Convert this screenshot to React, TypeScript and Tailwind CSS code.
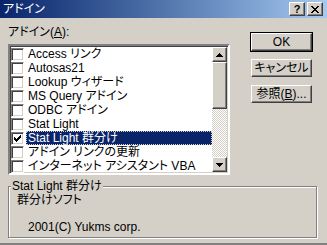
import React from 'react';

const items = [
  { label: 'Access リンク', checked: false },
  { label: 'Autosas21', checked: false },
  { label: 'Lookup ウィザード', checked: false },
  { label: 'MS Query アドイン', checked: false },
  { label: 'ODBC アドイン', checked: false },
  { label: 'Stat Light', checked: false },
  { label: 'Stat Light 群分け', checked: true, selected: true },
  { label: 'アドイン リンクの更新', checked: false },
  { label: 'インターネット アシスタント VBA', checked: false },
];

const raised =
  'border border-t-white border-l-white border-b-[#404040] border-r-[#404040] shadow-[inset_-1px_-1px_0_#808080]';

const CheckBox: React.FC<{ checked: boolean }> = ({ checked }) => (
  <div className="w-[13px] h-[13px] bg-white border border-t-[#808080] border-l-[#808080] border-b-white border-r-white shadow-[inset_1px_1px_0_#404040,inset_-1px_-1px_0_#d4d0c8] flex items-center justify-center">
    {checked && (
      <svg width="7" height="7" viewBox="0 0 7 7" shapeRendering="crispEdges">
        <path d="M0 2h1v3h-1zM1 3h1v3h-1zM2 4h1v3h-1zM3 3h1v3h-1zM4 2h1v3h-1zM5 1h1v3h-1zM6 0h1v3h-1z" fill="#000" />
      </svg>
    )}
  </div>
);

const Arrow: React.FC<{ down?: boolean }> = ({ down }) => (
  <div className={`w-full h-[15px] bg-[#d4d0c8] flex items-center justify-center ${raised}`}>
    <svg width="7" height="4" viewBox="0 0 7 4" shapeRendering="crispEdges">
      {down ? (
        <path d="M0 0h7v1h-7zM1 1h5v1h-5zM2 2h3v1h-3zM3 3h1v1h-1z" fill="#000" />
      ) : (
        <path d="M3 0h1v1h-1zM2 1h3v1h-3zM1 2h5v1h-5zM0 3h7v1h-7z" fill="#000" />
      )}
    </svg>
  </div>
);

const Button: React.FC<{ children: React.ReactNode; primary?: boolean }> = ({ children, primary }) => (
  <div className={primary ? 'border border-black' : 'border border-transparent'}>
    <div className={`h-[18px] w-[61px] bg-[#d4d0c8] flex items-center justify-center leading-[14px] ${raised}`}>
      {children}
    </div>
  </div>
);

export default function App() {
  return (
    <div className="w-[327px] h-[245px] bg-[#d4d0c8] flex flex-col overflow-hidden text-[12px] text-black font-['Liberation_Sans','Noto_Sans_CJK_JP',sans-serif] [font-feature-settings:'palt'] border-b-2 border-b-[#808080]">
      {/* title bar */}
      <div className="h-[18px] shrink-0 bg-gradient-to-r from-[#0a246a] to-[#a6caf0] flex items-center justify-between pl-[3px] pr-[4px]">
        <span className="text-white leading-[14px]">アドイン</span>
        <div className="flex gap-[2px]">
          <div className={`w-[16px] h-[14px] bg-[#d4d0c8] flex items-center justify-center font-bold text-[11px] leading-none ${raised}`}>?</div>
          <div className={`w-[16px] h-[14px] bg-[#d4d0c8] flex items-center justify-center ${raised}`}>
            <svg width="8" height="7" viewBox="0 0 8 7" shapeRendering="crispEdges">
              <path d="M0 0h2v1h-2zM6 0h2v1h-2zM1 1h2v1h-2zM5 1h2v1h-2zM2 2h4v1h-4zM3 3h2v1h-2zM2 4h4v1h-4zM1 5h2v1h-2zM5 5h2v1h-2zM0 6h2v1h-2zM6 6h2v1h-2z" fill="#000" />
            </svg>
          </div>
        </div>
      </div>

      <div className="flex">
        {/* list column */}
        <div className="ml-[8px] w-[222px]">
          <div className="mt-[7px] mb-[5px] leading-[14px]">
            アドイン(<span className="underline">A</span>):
          </div>
          <div className="h-[131px] border-2 border-t-[#808080] border-l-[#808080] border-b-white border-r-white shadow-[inset_1px_1px_0_#404040,inset_-1px_-1px_0_#d4d0c8] bg-white flex">
            <div className="flex-1 pt-[1px] pl-[1px]">
              {items.map((it) => (
                <div key={it.label} className="h-[14px] flex items-center">
                  <CheckBox checked={it.checked} />
                  <div
                    className={`ml-[2px] h-[14px] flex-1 px-[2px] leading-[14px] whitespace-nowrap ${
                      it.selected ? 'bg-[#0a246a] text-white outline-1 outline-dotted outline-[#d4d0c8] -outline-offset-1' : ''
                    }`}
                  >
                    {it.label}
                  </div>
                </div>
              ))}
            </div>
            {/* scrollbar */}
            <div className="w-[15px] flex flex-col mt-[1px] mr-[1px] mb-[1px]">
              <Arrow />
              <div className={`h-[47px] bg-[#d4d0c8] ${raised}`} />
              <div className="flex-1 bg-[image:repeating-conic-gradient(#d4d0c8_0_25%,#fff_0_50%)] bg-[length:2px_2px]" />
              <Arrow down />
            </div>
          </div>
        </div>

        {/* buttons */}
        <div className="ml-[20px] mt-[14px] flex flex-col gap-[6px]">
          <Button primary>OK</Button>
          <Button>キャンセル</Button>
          <Button>
            参照(<span className="underline">B</span>)...
          </Button>
        </div>
      </div>

      {/* group box */}
      <div className="relative mx-[8px] mt-[11px] h-[52px] w-[309px] border border-[#808080] shadow-[1px_1px_0_#fff,inset_1px_1px_0_#fff]">
        <span className="absolute -top-[8px] left-[2px] bg-[#d4d0c8] px-[1px] leading-[14px]">Stat Light 群分け</span>
        <div className="pl-[8px] pt-[6px] leading-[14px]">群分けソフト</div>
        <div className="pl-[19px] pt-[13px] leading-[14px]">2001(C) Yukms corp.</div>
      </div>
    </div>
  );
}
